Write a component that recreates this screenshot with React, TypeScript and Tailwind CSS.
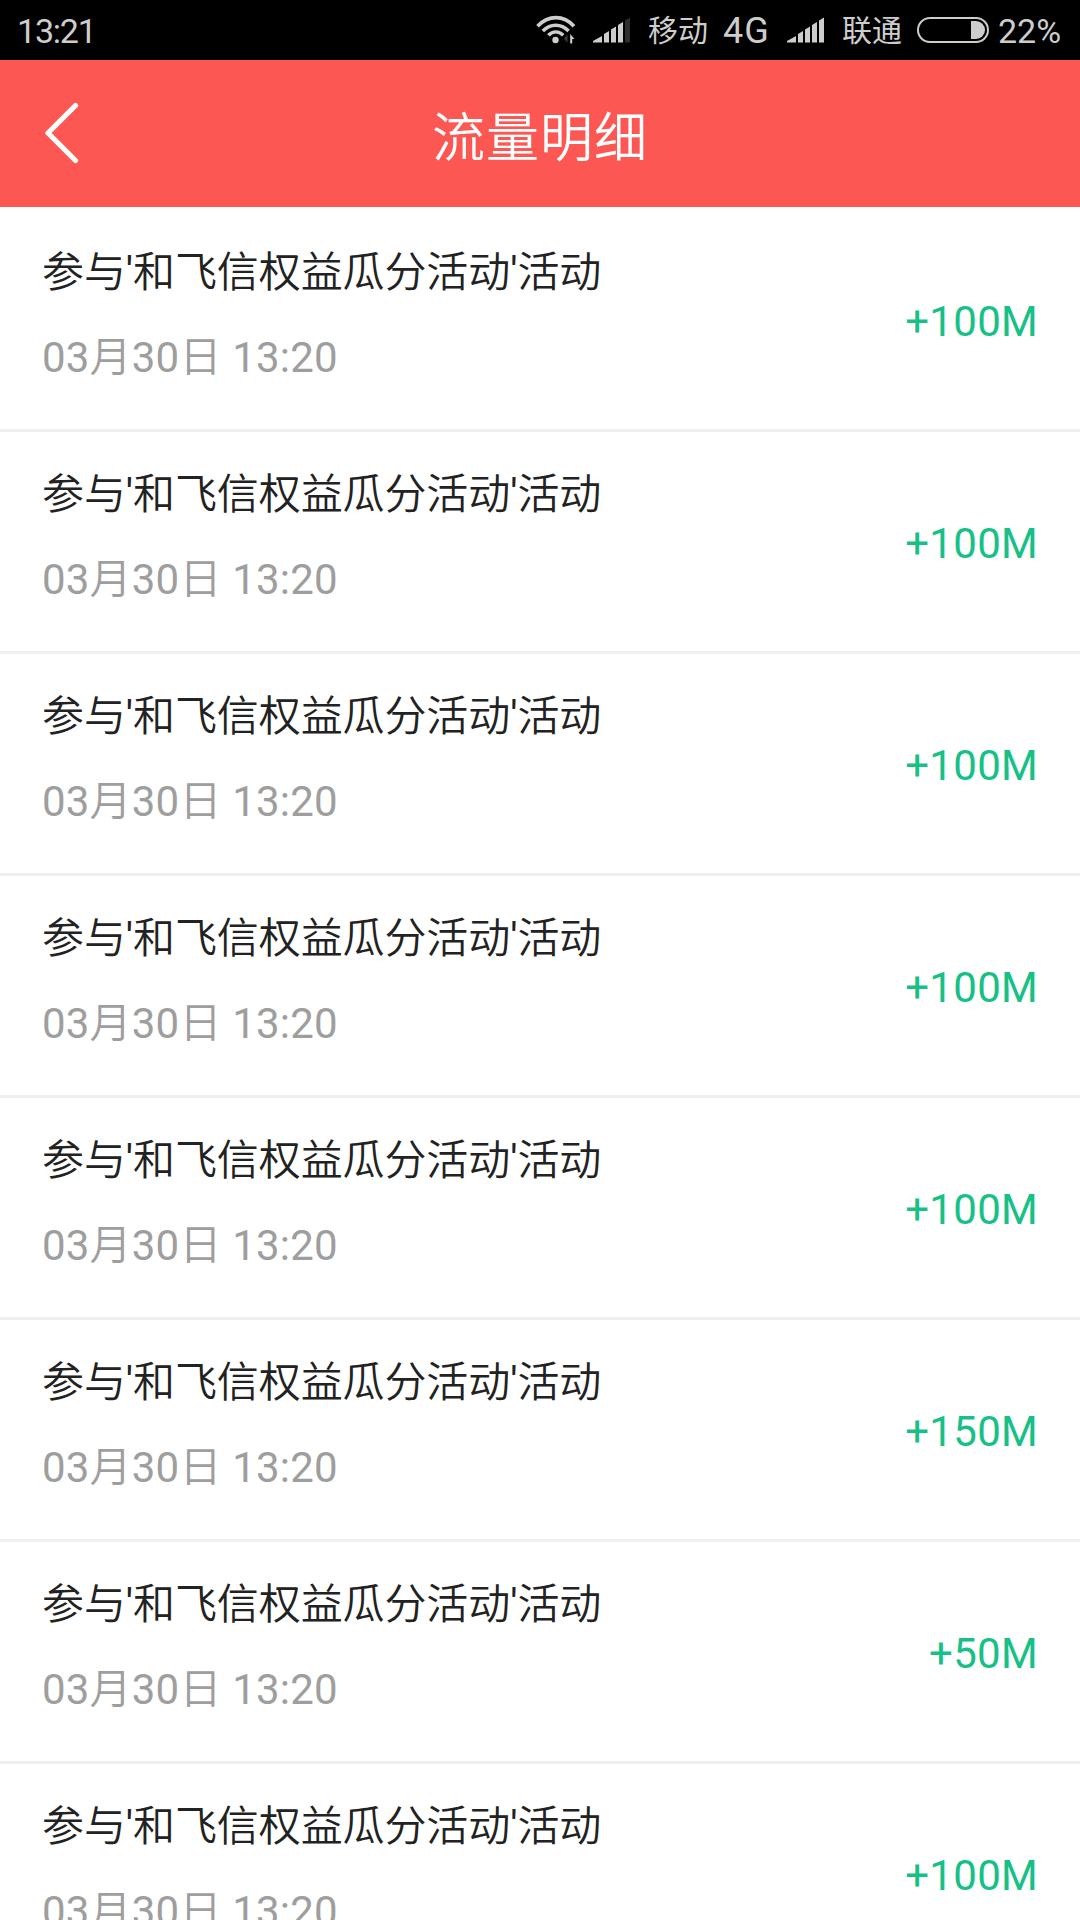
const records = [
  { id: 1, amount: '+100M' },
  { id: 2, amount: '+100M' },
  { id: 3, amount: '+100M' },
  { id: 4, amount: '+100M' },
  { id: 5, amount: '+100M' },
  { id: 6, amount: '+150M' },
  { id: 7, amount: '+50M' },
  { id: 8, amount: '+100M' },
];

function WifiIcon() {
  return (
    <svg width="40" height="30" viewBox="0 0 40 30" fill="none" className="shrink-0">
      <g stroke="#cdcdcd" strokeWidth="3.6">
        <path d="M1.5 11.2C12.5 -0.2 27.5 -0.2 38 11.2" />
        <path d="M6.8 16C14.5 8.4 25 8.4 32.6 16" />
        <path d="M12.3 20.3C17 15.8 22.6 15.8 27.3 20.3" />
      </g>
      <circle cx="19.5" cy="25" r="3.2" fill="#cdcdcd" />
      <path d="M28 23.5L31.5 19.5V28Z" fill="#3c3c3c" />
      <path d="M34.2 19L38.5 24H36.2V28.5H34.2Z" fill="#cdcdcd" />
    </svg>
  );
}

function SignalIcon({ full = false }: { full?: boolean }) {
  return (
    <svg width="38" height="26" viewBox="0 0 38 26" fill="#cdcdcd" className="shrink-0">
      <path d="M0 25.5V24L9 19V25.5Z" />
      <path d="M11 25.5V17L16 14V25.5Z" />
      <path d="M18 25.5V12.5L23 9.5V25.5Z" />
      <path d="M25 25.5V8L30 5V25.5Z" />
      <path d="M32 25.5V3.5L37 0.5V25.5Z" fill={full ? '#cdcdcd' : '#2e2e2e'} />
    </svg>
  );
}

function BatteryIcon() {
  return (
    <svg width="72" height="26" viewBox="0 0 72 26" fill="none" className="shrink-0">
      <rect x="1" y="1" width="70" height="24" rx="12" stroke="#cdcdcd" strokeWidth="2" />
      <path d="M54 4H59A9 9 0 0 1 59 22H54Z" fill="#cdcdcd" />
    </svg>
  );
}

function StatusBar() {
  return (
    <div className="flex h-[60px] shrink-0 items-center bg-black text-[34px] leading-none text-[#cdcdcd]">
      <span className="ml-[17px] w-[80px] pt-[2px] tracking-[-1.2px] whitespace-nowrap">13:21</span>
      <div className="ml-[439px]">
        <WifiIcon />
      </div>
      <div className="ml-[17px]">
        <SignalIcon />
      </div>
      <span className="ml-[17px] w-[60px] pt-[2px] text-[30px] whitespace-nowrap">移动</span>
      <span className="ml-[15px] w-[47px] pt-[2px] text-[36px] tracking-[1px] whitespace-nowrap">4G</span>
      <div className="ml-[17px]">
        <SignalIcon full />
      </div>
      <span className="ml-[17px] w-[60px] pt-[2px] text-[30px] whitespace-nowrap">联通</span>
      <div className="ml-[15px]">
        <BatteryIcon />
      </div>
      <span className="ml-[9px] pt-[2px] whitespace-nowrap">22%</span>
    </div>
  );
}

function App() {
  return (
    <div className="flex h-[1920px] w-[1080px] flex-col overflow-hidden bg-white font-['Roboto','Noto_Sans_CJK_SC',sans-serif]">
      <StatusBar />

      <header className="grid h-[147px] shrink-0 grid-cols-[120px_1fr_120px] items-center bg-[#fd5753] text-white">
        <button type="button" aria-label="返回" className="pb-[2px] pl-[44px]">
          <svg width="36" height="62" viewBox="0 0 36 62" fill="none">
            <path
              d="M31.5 3.5L4 31L31.5 58.5"
              stroke="currentColor"
              strokeWidth="5.2"
              strokeLinecap="round"
              strokeLinejoin="round"
            />
          </svg>
        </button>
        <h1 className="pt-[1px] text-center font-['Noto_Sans_CJK_SC',sans-serif] text-[53px] leading-none font-[350] tracking-[1px]">
          流量明细
        </h1>
      </header>

      <ul className="pt-[3px]">
        {records.map((record) => (
          <li
            key={record.id}
            className="flex h-[222px] items-start justify-between border-b-[3px] border-[#efefef] px-[42px]"
          >
            <div className="pt-[33px]">
              <p className="text-[42px] leading-[60px] font-[350] tracking-[-0.1px] text-[#222222]">
                参与<span className="font-normal">'</span>和飞信权益瓜分活动
                <span className="font-normal">'</span>活动
              </p>
              <p className="mt-[25px] text-[42px] leading-[60px] tracking-[0.2px] text-[#9e9e9e]">
                03
                <span className="font-[350]">月</span>
                30
                <span className="font-[350]">日</span> 13:20
              </p>
            </div>
            <span className="pt-[82px] text-[42px] leading-[60px] tracking-[0.3px] text-[#16c086]">
              {record.amount}
            </span>
          </li>
        ))}
      </ul>
    </div>
  );
}

export default App;
